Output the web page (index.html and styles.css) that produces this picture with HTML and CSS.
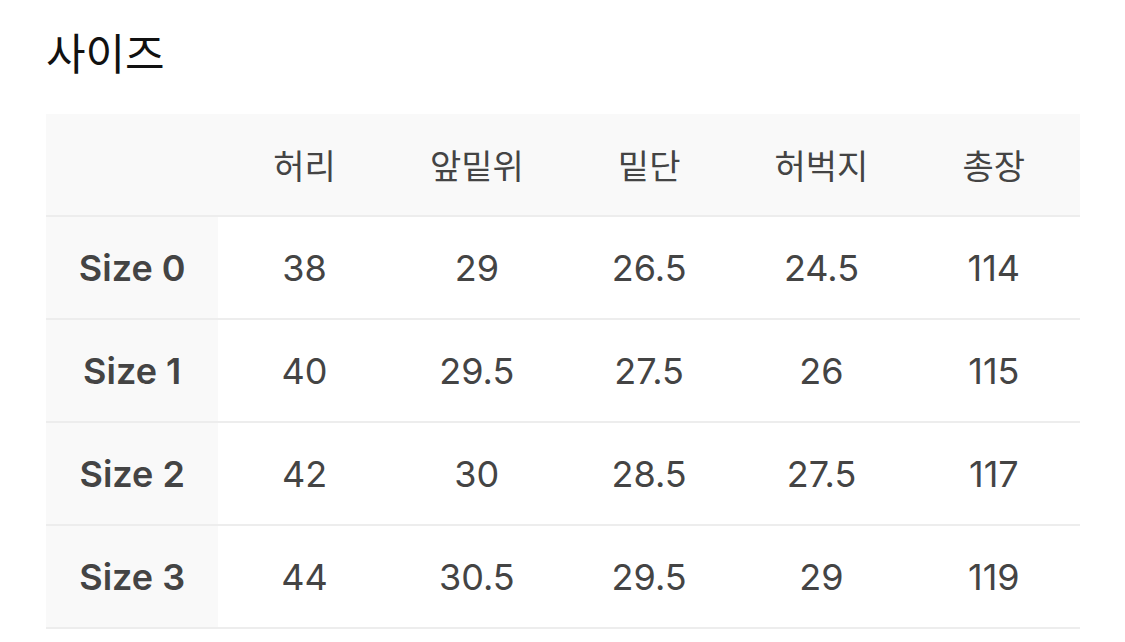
FILE: index.html
```html
<!DOCTYPE html>
<html lang="ko">
<head>
<meta charset="utf-8">
<link rel="stylesheet" href="styles.css">
</head>
<body>
<div class="page">
  <h1 class="title">사이즈</h1>
  <table class="size-table">
    <thead>
      <tr>
        <th class="corner"></th>
        <th>허리</th>
        <th>앞밑위</th>
        <th>밑단</th>
        <th>허벅지</th>
        <th>총장</th>
      </tr>
    </thead>
    <tbody>
      <tr><th class="label">Size 0</th><td>38</td><td>29</td><td>26.5</td><td>24.5</td><td>114</td></tr>
      <tr><th class="label">Size 1</th><td>40</td><td>29.5</td><td>27.5</td><td>26</td><td>115</td></tr>
      <tr><th class="label">Size 2</th><td>42</td><td>30</td><td>28.5</td><td>27.5</td><td>117</td></tr>
      <tr><th class="label">Size 3</th><td>44</td><td>30.5</td><td>29.5</td><td>29</td><td>119</td></tr>
    </tbody>
  </table>
</div>
</body>
</html>
```

FILE: styles.css
```css
html, body {
  margin: 0;
  padding: 0;
  background: #ffffff;
}

.page {
  padding: 24px 45px 0 46px;
  font-family: Inter, "Noto Sans CJK KR", sans-serif;
  color: #444444;
}

.title {
  margin: 0;
  font-family: "Noto Sans CJK KR", sans-serif;
  font-size: 43px;
  font-weight: 400;
  line-height: 54px;
  color: #111111;
}

.size-table {
  margin-top: 36px;
  width: 1034px;
  border-collapse: collapse;
  table-layout: fixed;
}

.size-table th,
.size-table td {
  height: 101px;
  padding: 0;
  text-align: center;
  vertical-align: middle;
  border-bottom: 2px solid #ededed;
  font-size: 36px;
  font-weight: 400;
  color: #444444;
}

.size-table thead th {
  background: #f9f9f9;
  font-family: "Noto Sans CJK KR", sans-serif;
  font-size: 34px;
  color: #444444;
}

.size-table .label {
  background: #f9f9f9;
  font-size: 36px;
  font-weight: 600;
  color: #444444;
}
```
